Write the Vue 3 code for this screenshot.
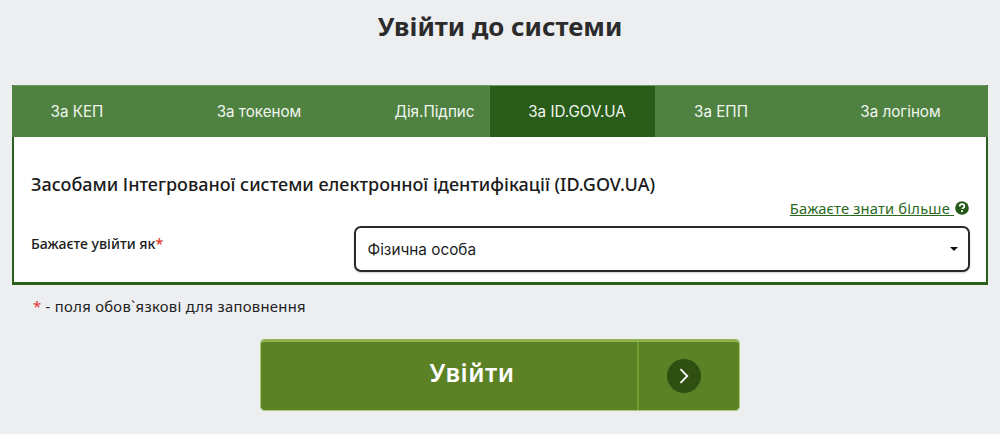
<script setup>
const tabs = ['За КЕП', 'За токеном', 'Дія.Підпис', 'За ID.GOV.UA', 'За ЕПП', 'За логіном']
const active = 3
</script>

<template>
  <main class="page">
    <h1 class="title">Увійти до системи</h1>
    <section class="panel">
      <nav class="tabs">
        <a v-for="(t, i) in tabs" :key="t" class="tab" :class="{ active: i === active }">{{ t }}</a>
      </nav>
      <div class="body">
        <h2 class="heading">Засобами Інтегрованої системи електронної ідентифікації (ID.GOV.UA)</h2>
        <div class="more">
          <a class="more-link">Бажаєте знати більше </a>
          <svg class="help" viewBox="0 0 16 16" width="14" height="14">
            <circle cx="8" cy="8" r="7.8" fill="#245a16" />
            <path d="M5.4 6.2c0-1.6 1.2-2.5 2.7-2.5s2.6.9 2.6 2.2c0 1.1-.7 1.6-1.4 2-.6.4-.8.6-.8 1.3" fill="none" stroke="#fff" stroke-width="2" />
            <rect x="7" y="10.5" width="2.1" height="2.1" fill="#fff" />
          </svg>
        </div>
        <div class="row">
          <label class="label">Бажаєте увійти як<span class="req">*</span></label>
          <div class="select">
            <span>Фізична особа</span>
            <i class="caret"></i>
          </div>
        </div>
      </div>
    </section>
    <p class="note"><span class="req">*</span> - поля обов`язкові для заповнення</p>
    <button class="submit" type="button">
      <span class="submit-text">Увійти</span>
      <span class="submit-side">
        <span class="circle">
          <svg viewBox="0 0 10 16" width="10" height="16"><path d="M1.5 1.2 8.3 8l-6.8 6.8" fill="none" stroke="#fff" stroke-width="1.8" /></svg>
        </span>
      </span>
    </button>
  </main>
</template>

<style>
html, body { margin: 0; background: #eceef0; }
</style>

<style scoped>
.page {
  height: 434px;
  overflow: hidden;
  box-sizing: border-box;
  padding: 9px 12px 0;
  background: #eceef0;
  font-family: Inter, "Noto Sans", sans-serif;
  color: #1c1c1c;
}
.title {
  margin: 0 0 42px;
  height: 34px;
  line-height: 34px;
  text-align: center;
  font-family: "Noto Sans", sans-serif;
  font-size: 25.8px;
  font-weight: 700;
  color: #2b2b2b;
}
.panel {
  border: 2px solid #2a5e1b;
  border-top: 1px solid #6f9a63;
  border-bottom-width: 3px;
  background: #fff;
}
.tabs {
  display: flex;
  height: 51px;
  margin: 0 -2px;
  background: #4f8241;
}
.tab {
  display: flex;
  align-items: center;
  justify-content: center;
  box-sizing: border-box;
  font-size: 15.2px;
  color: #f1f5ef;
}
.tab:nth-child(1) { width: 130px; }
.tab:nth-child(2) { width: 234px; }
.tab:nth-child(3) { width: 114px; padding-left: 3px; }
.tab:nth-child(4) { width: 165px; padding-left: 9px; }
.tab:nth-child(5) { width: 132px; }
.tab:nth-child(6) { width: 201px; padding-left: 26px; }
.tab.active { background: #285c18; }
.body { padding: 35px 16px 10px 17px; }
.heading {
  margin: 0;
  font-family: "Noto Sans", sans-serif;
  font-size: 18px;
  line-height: 24px;
  font-weight: 500;
  color: #1a1a1a;
}
.more {
  display: flex;
  justify-content: flex-end;
  align-items: center;
  gap: 1px;
  height: 16px;
  margin-top: 4px;
  padding-right: 1px;
}
.more-link {
  font-family: "Noto Sans", sans-serif;
  font-size: 14.7px;
  letter-spacing: 0.2px;
  color: #2a6a1c;
  text-decoration: underline;
  white-space: pre;
}
.help { flex: none; }
.row {
  display: flex;
  align-items: flex-start;
  margin-top: 10px;
}
.label {
  width: 323px;
  flex: none;
  margin-top: 9px;
  font-family: "Noto Sans", sans-serif;
  font-size: 14.1px;
  font-weight: 500;
  line-height: 18px;
}
.req { color: #e0342f; }
.select {
  flex: 1;
  height: 46px;
  box-sizing: border-box;
  display: flex;
  align-items: center;
  justify-content: space-between;
  padding: 0 10px 0 11.5px;
  border: 2px solid #2a2a2a;
  border-radius: 7px;
  background: #fff;
  font-size: 15.3px;
  color: #1c1c1c;
  box-shadow: 0 1px 2px rgba(0, 0, 0, 0.2);
}
.caret {
  width: 0;
  height: 0;
  border-left: 4px solid transparent;
  border-right: 4px solid transparent;
  border-top: 4px solid #111;
}
.note {
  margin: 11px 0 0 21px;
  font-family: "Noto Sans", sans-serif;
  font-size: 14.8px;
  letter-spacing: 0.3px;
  line-height: 20px;
  color: #222;
}
.submit {
  display: flex;
  width: 480px;
  height: 72px;
  margin: 23px auto 0;
  padding: 0;
  background: #5d8226;
  border: 1px solid #a9c876;
  border-top: 3px solid #8fb252;
  border-radius: 5px;
  color: #fff;
}
.submit-text {
  flex: 1;
  box-sizing: border-box;
  padding: 0 0 8px 46px;
  display: flex;
  align-items: center;
  justify-content: center;
  font-family: "Noto Sans", sans-serif;
  font-size: 25px;
  font-weight: 600;
  letter-spacing: 0.4px;
  border-right: 2px solid #6f9d34;
}
.submit-side {
  width: 100px;
  box-sizing: border-box;
  padding-right: 10px;
  display: flex;
  align-items: center;
  justify-content: center;
}
.circle {
  width: 34px;
  height: 34px;
  border-radius: 50%;
  background: #2f5010;
  display: flex;
  align-items: center;
  justify-content: center;
}
</style>
